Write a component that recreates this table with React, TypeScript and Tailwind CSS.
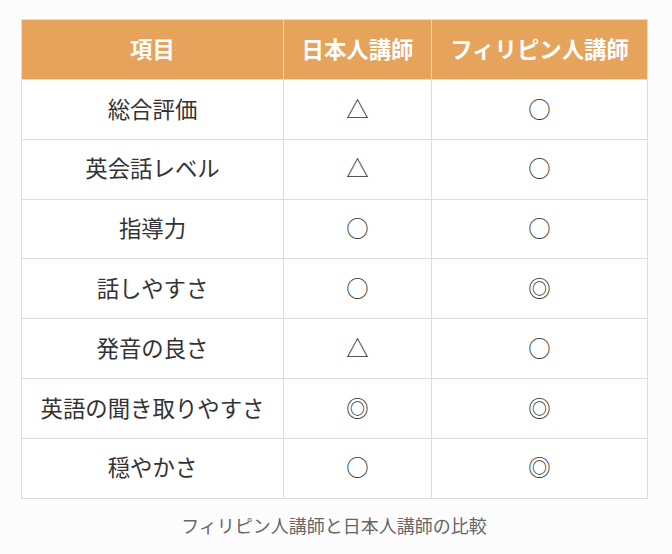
import React from "react";

const rows: [string, string, string][] = [
  ["総合評価", "△", "○"],
  ["英会話レベル", "△", "○"],
  ["指導力", "○", "○"],
  ["話しやすさ", "○", "◎"],
  ["発音の良さ", "△", "○"],
  ["英語の聞き取りやすさ", "◎", "◎"],
  ["穏やかさ", "○", "◎"],
];

export default function App() {
  return (
    <div
      className="w-[672px] h-[554px] bg-[#fcfcfc] pt-[19px] pl-[21px]"
      style={{ fontFamily: '"Noto Sans CJK JP", "Noto Sans", sans-serif' }}
    >
      <table className="border-collapse bg-white text-[#333] text-[22.4px] leading-none w-[626px] table-fixed">
        <colgroup>
          <col className="w-[262px]" />
          <col className="w-[148px]" />
          <col className="w-[216px]" />
        </colgroup>
        <thead>
          <tr className="bg-[#e6a35c] text-white">
            <th className="h-[60px] p-0 pb-[3px] border border-[#dddddd] font-bold text-center">項目</th>
            <th className="h-[60px] p-0 pb-[3px] border border-[#dddddd] font-bold text-center">日本人講師</th>
            <th className="h-[60px] p-0 pb-[3px] border border-[#dddddd] font-bold text-center">フィリピン人講師</th>
          </tr>
        </thead>
        <tbody>
          {rows.map((r) => (
            <tr key={r[0]}>
              <td className="h-[59.8px] p-0 pb-[3px] border border-[#dddddd] text-center">{r[0]}</td>
              <td className="h-[59.8px] p-0 pb-[3px] border border-[#dddddd] text-center">{r[1]}</td>
              <td className="h-[59.8px] p-0 pb-[3px] border border-[#dddddd] text-center">{r[2]}</td>
            </tr>
          ))}
        </tbody>
      </table>
      <div className="w-[626px] text-center text-[#666] text-[18px] mt-[17px] leading-none">
        フィリピン人講師と日本人講師の比較
      </div>
    </div>
  );
}
